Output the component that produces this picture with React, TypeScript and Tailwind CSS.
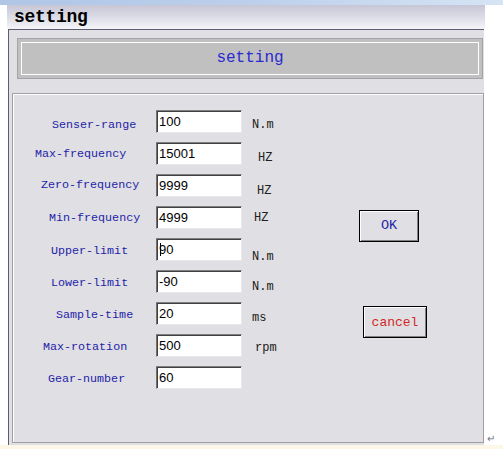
import React from "react";

type Row = {
  label: string;
  value: string;
  unit: string;
  lp: string;
  ly: string;
  um: string;
  uy: string;
  caret?: boolean;
};

const rows: Row[] = [
  { label: "Senser-range", value: "100", unit: "N.m", lp: "pl-[39px]", ly: "translate-y-[3px]", um: "ml-[10px]", uy: "translate-y-[3px]" },
  { label: "Max-frequency", value: "15001", unit: "HZ", lp: "pl-[22px]", ly: "translate-y-[0px]", um: "ml-[16px]", uy: "translate-y-[4px]" },
  { label: "Zero-frequency", value: "9999", unit: "HZ", lp: "pl-[28px]", ly: "translate-y-[-1px]", um: "ml-[15px]", uy: "translate-y-[5px]" },
  { label: "Min-frequency", value: "4999", unit: "HZ", lp: "pl-[36px]", ly: "translate-y-[0px]", um: "ml-[12px]", uy: "translate-y-[0px]" },
  { label: "Upper-limit", value: "90", unit: "N.m", lp: "pl-[38px]", ly: "translate-y-[1px]", um: "ml-[10px]", uy: "translate-y-[7px]", caret: true },
  { label: "Lower-limit", value: "-90", unit: "N.m", lp: "pl-[38px]", ly: "translate-y-[1px]", um: "ml-[10px]", uy: "translate-y-[5px]" },
  { label: "Sample-time", value: "20", unit: "ms", lp: "pl-[43px]", ly: "translate-y-[1px]", um: "ml-[10px]", uy: "translate-y-[4px]" },
  { label: "Max-rotation", value: "500", unit: "rpm", lp: "pl-[30px]", ly: "translate-y-[1px]", um: "ml-[13px]", uy: "translate-y-[2px]" },
  { label: "Gear-number", value: "60", unit: "", lp: "pl-[35px]", ly: "translate-y-[1px]", um: "ml-[10px]", uy: "translate-y-[0px]" },
];

const mono = { fontFamily: '"Liberation Mono", "DejaVu Sans Mono", monospace' };
const sans = { fontFamily: '"Liberation Sans", Arial, sans-serif' };

export default function App() {
  return (
    <div className="w-[503px] h-[449px] bg-white overflow-hidden flex flex-col">
      {/* top blue strip */}
      <div className="h-[5px] shrink-0 bg-gradient-to-r from-[#b0c6e6] via-[#bcd0ec] to-[#d6e4f4]" />
      {/* title bar */}
      <div className="flex shrink-0">
        <div className="w-[7px]" />
        <div className="w-[478px] h-[24px] bg-gradient-to-b from-[#c6c6d6] via-[#dcdce6] to-[#f4f4f8] flex items-center pl-[7px]">
          <span className="text-[18px] font-bold text-black leading-none tracking-[-0.3px]" style={mono}>
            setting
          </span>
        </div>
      </div>
      {/* body */}
      <div className="flex shrink-0">
        <div className="w-[8px]" />
        <div className="w-[476px] h-[416px] bg-[#e0dfe3] border-t border-l border-[#5c5c70] flex flex-col">
          {/* header panel */}
          <div className="ml-[8px] mt-[8px] w-[466px] h-[41px] border border-[#a4a4a8] bg-[#c0c0c0] p-[3px]">
            <div className="h-full border border-white flex items-center justify-center">
              <span className="text-[16px] text-[#2a2ad0] leading-none translate-y-[-1px]" style={mono}>
                setting
              </span>
            </div>
          </div>
          {/* group box */}
          <div className="ml-[3px] mt-[14px] w-[472px] h-[350px] border border-[#a0a0a4] shadow-[inset_1px_1px_0_#ffffff] flex">
            <div className="w-[277px] pt-[16px] flex flex-col">
              {rows.map((r) => (
                <div key={r.label} className="flex items-center h-[23px] mb-[9px]">
                  <div className={`w-[143px] ${r.lp}`}>
                    <span className={`block text-[11.7px] leading-[14px] text-[#1e1ea8] ${r.ly}`} style={mono}>
                      {r.label}
                    </span>
                  </div>
                  <div className="w-[86px] h-[23px] bg-white border-t border-l border-t-[#808080] border-l-[#707070] border-r border-b border-r-[#e8e8e8] border-b-[#e8e8e8] shadow-[inset_1px_1px_0_#404040] flex items-center pl-[2px] relative">
                    {r.caret && <span className="w-[1px] h-[13px] bg-black absolute left-[3px]" />}
                    <span className="text-[13px] text-black leading-none" style={sans}>
                      {r.value}
                    </span>
                  </div>
                  {r.unit && (
                    <span className={`${r.um} ${r.uy} text-[12px] text-[#202020] leading-none`} style={mono}>
                      {r.unit}
                    </span>
                  )}
                </div>
              ))}
            </div>
            <div className="flex flex-col pt-[116px]">
              <button className="ml-[69px] w-[60px] h-[32px] bg-[#e0dfe3] border border-black shadow-[inset_1px_1px_0_#ffffff,inset_-1px_-1px_0_#808080] flex items-center justify-center">
                <span className="text-[13.5px] text-[#2424a8] leading-none" style={mono}>OK</span>
              </button>
              <button className="ml-[73px] mt-[64px] w-[64px] h-[32px] bg-[#e0dfe3] border border-black shadow-[inset_1px_1px_0_#ffffff,inset_-1px_-1px_0_#808080] flex items-center justify-center">
                <span className="text-[13px] text-[#d02828] leading-none" style={mono}>cancel</span>
              </button>
            </div>
          </div>
        </div>
        <div className="flex-1 flex items-end pb-[1px] pl-[3px]">
          <span className="text-[10px] text-[#707080] leading-none" style={sans}>↵</span>
        </div>
      </div>
      {/* bottom strip */}
      <div className="flex-1 bg-[#fcf7e6]" />
    </div>
  );
}
